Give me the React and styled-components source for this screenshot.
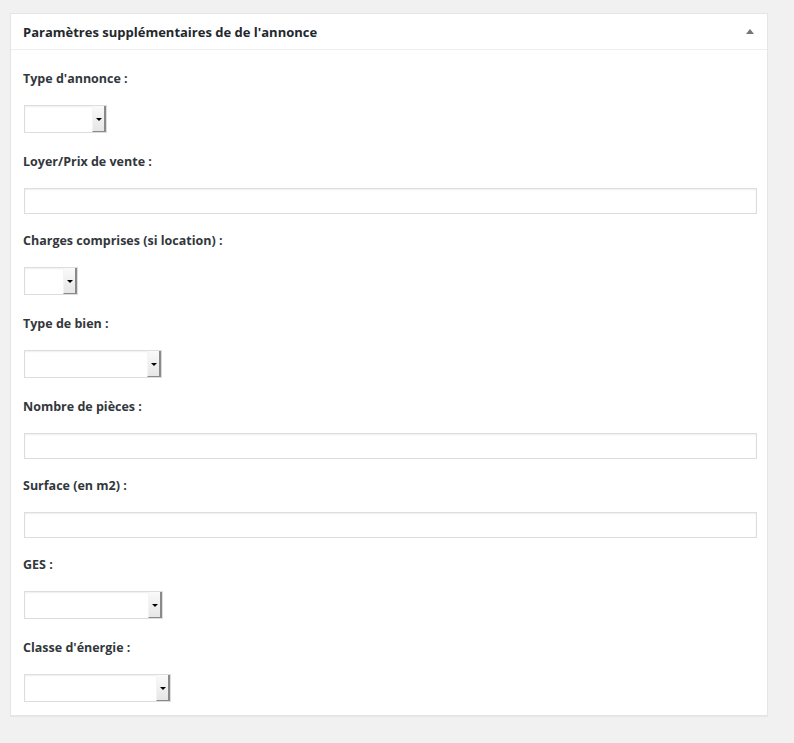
import styled, { createGlobalStyle } from "styled-components";

const GlobalStyle = createGlobalStyle`
  html, body {
    margin: 0;
    padding: 0;
    background: #f1f1f1;
  }
  body {
    font-family: "Open Sans", "DejaVu Sans", sans-serif;
    color: #32373c;
  }
`;

const Page = styled.div`
  padding: 13px 26px 27px 10px;
`;

const Box = styled.div`
  background: #fff;
  border: 1px solid #e5e5e5;
  box-shadow: 0 1px 1px rgba(0, 0, 0, 0.04);
`;

const Header = styled.div`
  display: flex;
  align-items: center;
  justify-content: space-between;
  height: 35px;
  padding: 0 12px 0 12px;
  border-bottom: 1px solid #eee;
`;

const Title = styled.h2`
  margin: 0;
  font-size: 13px;
  font-weight: 700;
  color: #23282d;
`;

const Toggle = styled.span`
  width: 0;
  height: 0;
  border-left: 4px solid transparent;
  border-right: 4px solid transparent;
  border-bottom: 5px solid #72777c;
  margin-right: 1px;
`;

const Inside = styled.div`
  padding: 21px 10px 13px 13px;
`;

const Field = styled.div`
  margin-bottom: ${(p) => (p.$last ? "0" : p.$select ? "21px" : "19px")};
`;

const Label = styled.label`
  display: block;
  font-size: 12.5px;
  font-weight: 700;
  line-height: 16px;
  margin: 0 0 18px -1px;
`;

const TextInput = styled.input`
  display: block;
  box-sizing: border-box;
  width: 100%;
  height: 26px;
  margin: 0;
  border: 1px solid #ddd;
  box-shadow: inset 0 1px 2px rgba(0, 0, 0, 0.07);
  background: #fff;
  outline: none;
`;

const Select = styled.div`
  box-sizing: border-box;
  display: flex;
  justify-content: flex-end;
  width: ${(p) => p.$w}px;
  height: 28px;
  border: 1px solid #ddd;
  box-shadow: inset 0 1px 2px rgba(0, 0, 0, 0.07);
  background: #fff;
`;

const SelectButton = styled.div`
  box-sizing: border-box;
  width: 14px;
  height: 100%;
  display: flex;
  align-items: center;
  justify-content: center;
  background: linear-gradient(#fafafa, #e6e6e6);
  border-left: 1px solid #f4f4f4;
  border-right: 2px solid #8a8a8a;
  border-bottom: 1px solid #8a8a8a;
`;

const Caret = styled.span`
  width: 0;
  height: 0;
  border-left: 3px solid transparent;
  border-right: 3px solid transparent;
  border-top: 3px solid #000;
  margin-top: 1px;
`;

const fields = [
  { label: "Type d'annonce :", select: 83 },
  { label: "Loyer/Prix de vente :" },
  { label: "Charges comprises (si location) :", select: 54 },
  { label: "Type de bien :", select: 138 },
  { label: "Nombre de pièces :" },
  { label: "Surface (en m2) :" },
  { label: "GES :", select: 139 },
  { label: "Classe d'énergie :", select: 147 },
];

export default function App() {
  return (
    <>
      <GlobalStyle />
      <Page>
        <Box>
          <Header>
            <Title>Paramètres supplémentaires de de l'annonce</Title>
            <Toggle />
          </Header>
          <Inside>
            {fields.map((f, i) => (
              <Field key={f.label} $select={!!f.select} $last={i === fields.length - 1}>
                <Label>{f.label}</Label>
                {f.select ? (
                  <Select $w={f.select}>
                    <SelectButton>
                      <Caret />
                    </SelectButton>
                  </Select>
                ) : (
                  <TextInput type="text" />
                )}
              </Field>
            ))}
          </Inside>
        </Box>
      </Page>
    </>
  );
}
